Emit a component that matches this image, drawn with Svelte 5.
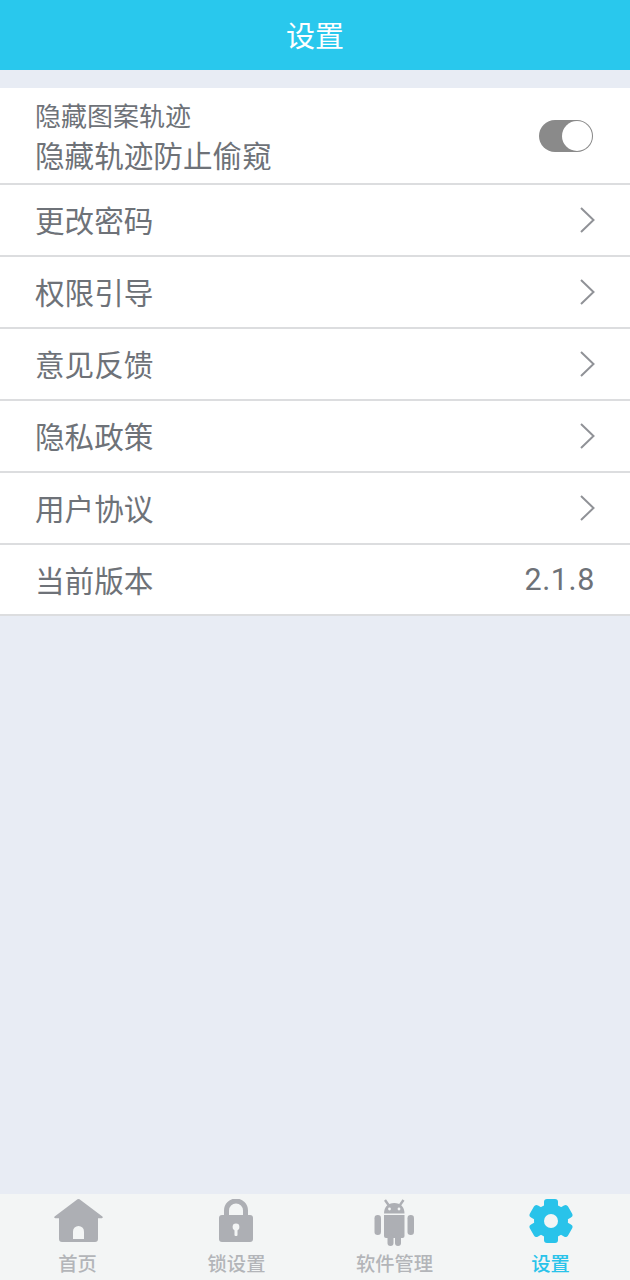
<script>
  const rows = ["更改密码", "权限引导", "意见反馈", "隐私政策", "用户协议"];
</script>

<div class="page">
  <header class="title">设置</header>

  <section class="list">
    <div class="row toggle-row">
      <div class="texts">
        <div class="small">隐藏图案轨迹</div>
        <div class="sub">隐藏轨迹防止偷窥</div>
      </div>
      <div class="switch"><div class="knob"></div></div>
    </div>
    {#each rows as label}
      <div class="row">
        <span>{label}</span>
        <svg class="chev" viewBox="0 0 15 26" width="15" height="26" fill="none" stroke="#909297" stroke-width="2">
          <path d="M1 1 13.500 13 1 25" />
        </svg>
      </div>
    {/each}
    <div class="row last">
      <span>当前版本</span>
      <span class="version">2.1.8</span>
    </div>
  </section>

  <div class="spacer"></div>

  <nav class="tabs">
    <div class="tab">
      <svg class="home" viewBox="0 0 49 43" width="49" height="43">
        <path fill="#adafb4" d="M22.500 1a3 3 0 0 1 4 0L48.400 17.500c.8.700.4 1.700-.6 1.700H44V40a3 3 0 0 1-3 3H8a3 3 0 0 1-3-3V19.200H1.200c-1 0-1.400-1-.6-1.700Z" />
        <path fill="#f3f5f5" d="M19 40V32.500a5.500 5.500 0 0 1 11 0V40Z" />
      </svg>
      <span>首页</span>
    </div>
    <div class="tab">
      <svg class="lock" viewBox="0 0 34 43" width="34" height="43">
        <path fill="none" stroke="#adafb4" stroke-width="5" d="M7.500 18V11.500a9.500 9.500 0 0 1 19 0V18" />
        <rect fill="#adafb4" x="0" y="16" width="34" height="27" rx="3" />
        <circle fill="#f3f5f5" cx="17" cy="28" r="3.400" />
        <rect fill="#f3f5f5" x="15.500" y="29" width="3" height="8" rx="1" />
      </svg>
      <span>锁设置</span>
    </div>
    <div class="tab">
      <svg class="robot" viewBox="0 0 40 47" width="40" height="47">
        <g fill="#adafb4">
          <path d="M10 14.500c0-6.500 4-10.500 10.250-10.500s10.250 4 10.250 10.500Z" />
          <path d="M10 16h20.500v21a2 2 0 0 1-2 2H12a2 2 0 0 1-2-2Z" />
          <rect x="0.500" y="16" width="6.500" height="20" rx="3.200" />
          <rect x="33.500" y="16" width="6.500" height="20" rx="3.200" />
          <rect x="13.500" y="35" width="6" height="12" rx="3" />
          <rect x="21" y="35" width="6" height="12" rx="3" />
        </g>
        <path stroke="#adafb4" stroke-width="2.400" d="M14.500 6 11 1M26 6 29.500 1" />
        <circle fill="#f3f5f5" cx="15.500" cy="10" r="1.400" />
        <circle fill="#f3f5f5" cx="25" cy="10" r="1.400" />
      </svg>
      <span>软件管理</span>
    </div>
    <div class="tab active">
      <svg viewBox="0 0 44 44" width="44" height="44">
        <g fill="#29c3ea">
          <circle cx="22" cy="22" r="17" />
          <rect x="15" y="0" width="14" height="44" rx="3" />
          <rect x="15" y="0" width="14" height="44" rx="3" transform="rotate(60 22 22)" />
          <rect x="15" y="0" width="14" height="44" rx="3" transform="rotate(120 22 22)" />
        </g>
        <circle fill="#f3f5f5" cx="22" cy="22" r="7" />
      </svg>
      <span>设置</span>
    </div>
  </nav>
</div>

<style>
  :global(body) {
    margin: 0;
    background: #e8ecf4;
  }

  .page {
    display: flex;
    flex-direction: column;
    height: 1280px;
    font-family: "Roboto", "Noto Sans CJK SC", sans-serif;
    color: #6e7278;
  }

  .title {
    height: 70px;
    line-height: 74px;
    background: #29c8ed;
    color: #fff;
    font-size: 29px;
    text-align: center;
    flex: none;
  }

  .list {
    margin-top: 18px;
    background: #fff;
    flex: none;
  }

  .row {
    display: flex;
    align-items: center;
    justify-content: space-between;
    box-sizing: border-box;
    height: 72px;
    padding: 0 35px 1px;
    border-bottom: 2px solid #dcdddf;
    font-size: 29.600px;
  }

  .toggle-row {
    height: 97px;
    padding: 0 37px 0 35px;
  }

  .row.last {
    height: 71px;
  }

  .small {
    font-size: 26px;
    line-height: 30px;
  }

  .sub {
    font-size: 29.600px;
    line-height: 44px;
    margin-top: 3px;
  }

  .texts {
    padding-top: 9px;
  }

  .switch {
    width: 54px;
    height: 32px;
    box-sizing: border-box;
    border-radius: 16px;
    background: #8a8a8a;
    display: flex;
    justify-content: flex-end;
    align-items: center;
    padding-right: 1px;
  }

  .knob {
    width: 30px;
    height: 30px;
    border-radius: 50%;
    background: #fff;
  }

  .version {
    font-size: 30.500px;
    letter-spacing: 0.600px;
  }

  .spacer {
    flex: 1;
  }

  .tabs {
    display: grid;
    grid-template-columns: 155px 163px 153px 159px;
    height: 86px;
    background: #f3f5f5;
    flex: none;
  }

  .tab {
    display: flex;
    flex-direction: column;
    align-items: center;
    justify-content: space-between;
    font-size: 19.300px;
    font-weight: 500;
    line-height: 26px;
    color: #b3b5b9;
    padding: 5px 0 2px;
  }

  .tab svg {
    display: block;
  }

  .tab .home {
    margin-left: 2px;
  }

  .tab .lock {
    margin-right: 1px;
  }

  .tab .robot {
    margin-right: 2px;
  }

  .tab.active {
    color: #29c3ea;
  }
</style>
